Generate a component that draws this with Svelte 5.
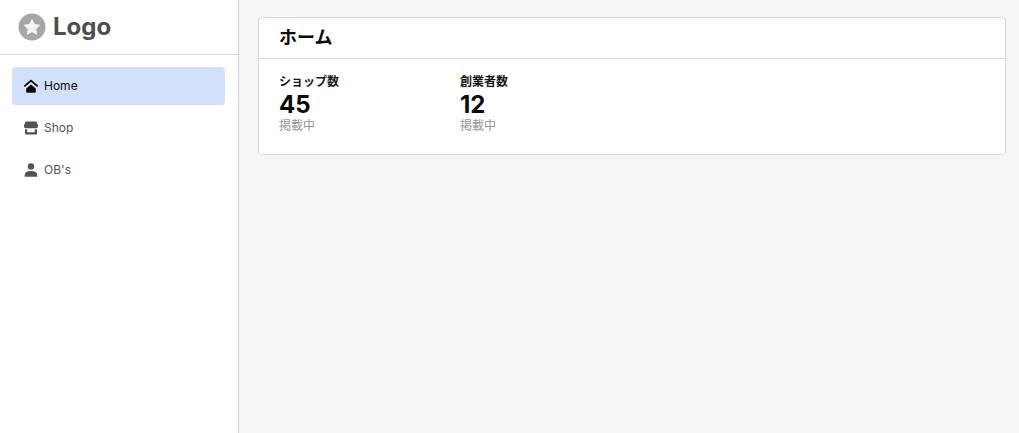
<script>
	const nav = [
		{ label: 'Home', icon: 'home', active: true },
		{ label: 'Shop', icon: 'shop', active: false },
		{ label: "OB's", icon: 'user', active: false }
	];
	const stats = [
		{ title: 'ショップ数', value: 45, note: '掲載中' },
		{ title: '創業者数', value: 12, note: '掲載中' }
	];
</script>

<div class="layout">
	<aside>
		<div class="brand">
			<svg width="28" height="28" viewBox="0 0 28 28">
				<circle cx="14" cy="14" r="13.500" fill="#a6a6a6" />
				<path d="M14 6.600l2.300 4.900 5.300.7-3.900 3.700 1 5.300-4.700-2.600-4.700 2.600 1-5.300-3.900-3.700 5.300-.7z" fill="#f4f4f4" stroke="#f4f4f4" stroke-width="1" stroke-linejoin="round" />
			</svg>
			<span class="name">Logo</span>
		</div>
		<nav>
			{#each nav as item}
				<div class="item" class:active={item.active}>
					<svg width="16" height="16" viewBox="0 0 16 16">
						{#if item.icon === 'home'}
							<path d="M1.300 8.400L8 2.600l6.700 5.800" fill="none" stroke="currentColor" stroke-width="1.800" />
							<path d="M8 6.400l4.800 4.100v3q0 1.300-1.300 1.300H4.500q-1.300 0-1.300-1.300v-3z" fill="currentColor" />
						{:else if item.icon === 'shop'}
							<path d="M3.400 1.400h9.200q.7 0 1 .6l1.400 3.200v1.200q0 1.800-1.600 1.800H2.600Q1 8.200 1 6.400V5.200l1.400-3.200q.3-.6 1-.6z" fill="currentColor" />
							<path d="M2 9.200h2.200v3h7.600v-3H14v4.400q0 1-.9 1H2.900q-.9 0-.9-1z" fill="currentColor" />
						{:else}
							<circle cx="8" cy="4.400" r="3.200" fill="currentColor" />
							<path d="M1.800 14.800v-1.600q0-4.200 6.200-4.200t6.200 4.200v1.600z" fill="currentColor" />
						{/if}
					</svg>
					<span>{item.label}</span>
				</div>
			{/each}
		</nav>
	</aside>

	<main>
		<section class="card">
			<h1>ホーム</h1>
			<div class="stats">
				{#each stats as s}
					<div class="stat">
						<div class="title">{s.title}</div>
						<div class="value">{s.value}</div>
						<div class="note">{s.note}</div>
					</div>
				{/each}
			</div>
		</section>
	</main>
</div>

<style>
	:global(body) {
		font-family: Inter, "Noto Sans CJK JP", sans-serif;
		background: #f5f5f5;
	}
	.layout { display: flex; height: 433px; overflow: hidden; }
	aside {
		width: 239px;
		box-sizing: border-box;
		flex-shrink: 0;
		background: #fff;
		border-right: 1px solid #d4d4d4;
	}
	.brand {
		display: flex;
		align-items: center;
		gap: 7px;
		height: 55px;
		box-sizing: border-box;
		padding-left: 18px;
		border-bottom: 1px solid #d9d9d9;
		color: #4d4d4d;
		font-size: 24px;
		font-weight: 700;
	}
	.name { padding-bottom: 2px; }
	nav { display: flex; flex-direction: column; gap: 4px; padding: 12px 13px 12px 12px; }
	.item {
		display: flex;
		align-items: center;
		gap: 4px;
		height: 38px;
		padding-left: 11px;
		border-radius: 4px;
		font-size: 12px;
		color: #525252;
	}
	.item span { margin-left: 1px; padding-bottom: 2px; }
	.item.active { background: #d2e0fb; color: #0a0a0a; }
	main { flex: 1; padding: 17px 13px 0 19px; }
	.card {
		background: #fff;
		border: 1px solid #d9d9d9;
		border-radius: 4px;
		height: 138px;
		box-sizing: border-box;
	}
	h1 {
		margin: 0;
		height: 41px;
		box-sizing: border-box;
		padding: 8px 20px 0;
		border-bottom: 1px solid #d9d9d9;
		font-size: 18px;
		line-height: 24px;
		font-weight: 700;
		color: #0a0a0a;
	}
	.stats { display: flex; padding: 15px 20px; }
	.stat { width: 181px; }
	.title { font-size: 12px; line-height: 16px; font-weight: 600; color: #171717; }
	.value { font-size: 24px; line-height: 30px; font-weight: 700; color: #0a0a0a; }
	.note { font-size: 12px; line-height: 14px; color: #949494; margin-top: -1px; }
</style>
